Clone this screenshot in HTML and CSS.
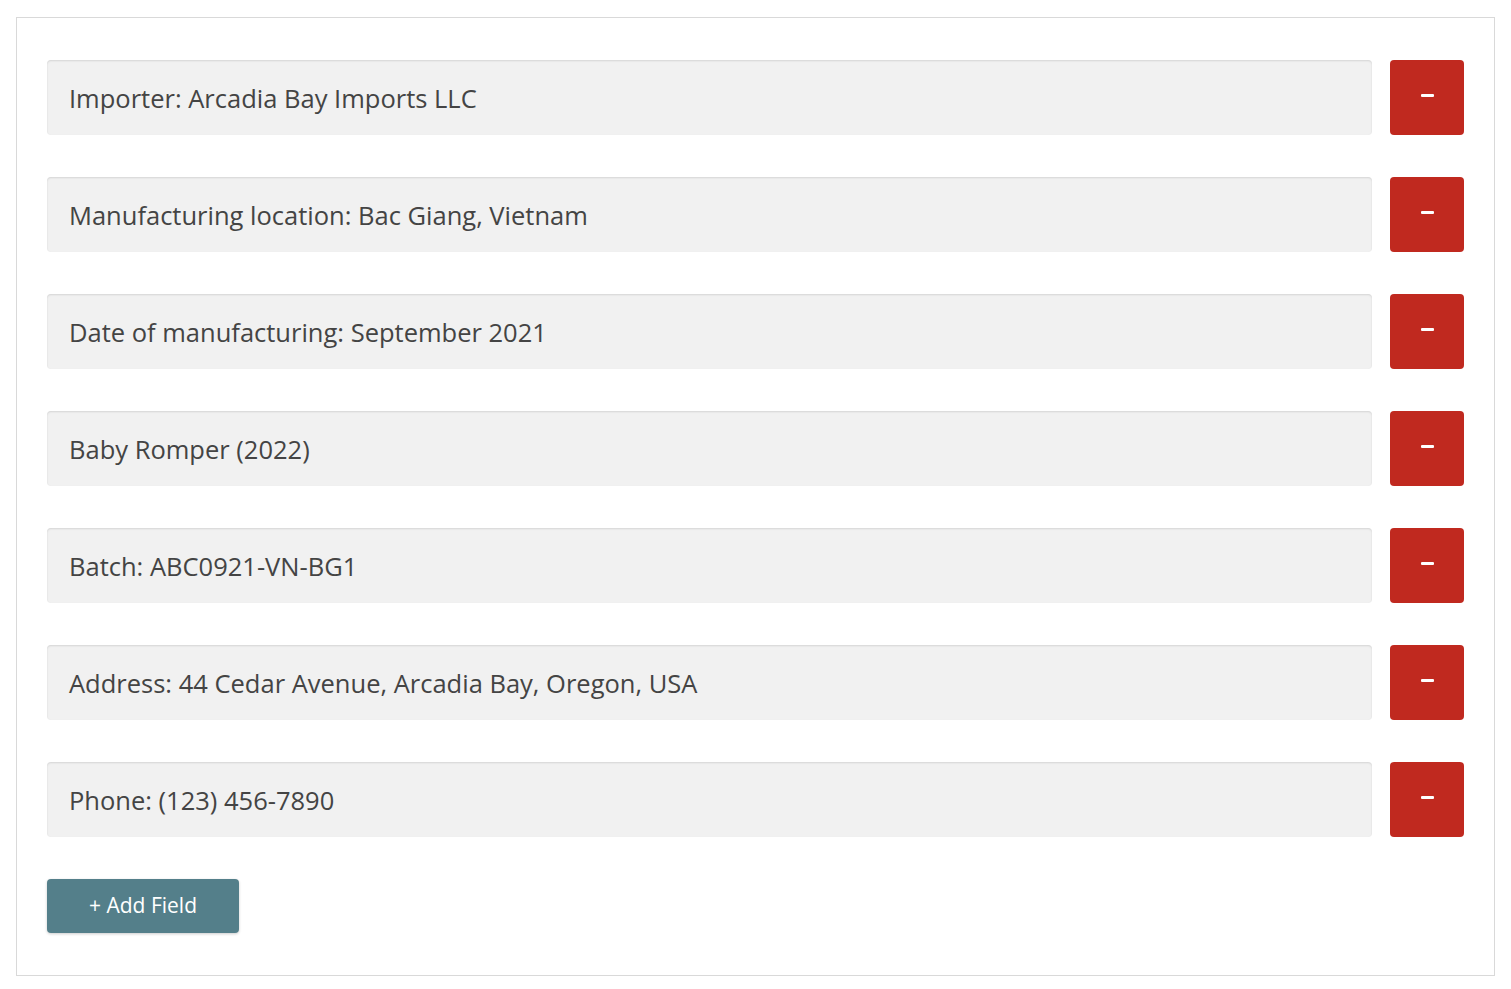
FILE: index.html
```html
<!DOCTYPE html>
<html>
<head>
<meta charset="utf-8">
<link rel="stylesheet" href="styles.css">
</head>
<body>
<div class="panel">
  <div class="row"><div class="field">Importer: Arcadia Bay Imports LLC</div><button class="remove"><span class="bar"></span></button></div>
  <div class="row"><div class="field">Manufacturing location: Bac Giang, Vietnam</div><button class="remove"><span class="bar"></span></button></div>
  <div class="row"><div class="field">Date of manufacturing: September 2021</div><button class="remove"><span class="bar"></span></button></div>
  <div class="row"><div class="field">Baby Romper (2022)</div><button class="remove"><span class="bar"></span></button></div>
  <div class="row"><div class="field">Batch: ABC0921-VN-BG1</div><button class="remove"><span class="bar"></span></button></div>
  <div class="row"><div class="field">Address: 44 Cedar Avenue, Arcadia Bay, Oregon, USA</div><button class="remove"><span class="bar"></span></button></div>
  <div class="row"><div class="field">Phone: (123) 456-7890</div><button class="remove"><span class="bar"></span></button></div>
  <div class="actions"><button class="add">+ Add Field</button></div>
</div>
</body>
</html>
```
FILE: styles.css
```css
html, body { margin: 0; background: #fff; }
body {
  padding: 17px 16px 13px 16px;
  font-family: "Open Sans", "Liberation Sans", sans-serif;
}
.panel {
  border: 1px solid #d9d9d9;
  padding: 42px 30px 42px 30px;
  display: flex;
  flex-direction: column;
  gap: 42px;
}
.row {
  display: flex;
  gap: 18px;
  height: 75px;
}
.field {
  flex: 1;
  background: #f1f1f1;
  border-radius: 4px;
  box-shadow: inset 0 1px 2px rgba(0,0,0,0.12);
  display: flex;
  align-items: center;
  padding-left: 22px;
  font-size: 25.5px;
  color: #444;
}
.remove {
  width: 74px;
  height: 75px;
  border: none;
  border-radius: 4px;
  background: #c0291f;
  display: flex;
  align-items: center;
  justify-content: center;
  padding: 0;
}
.bar {
  display: block;
  width: 13px;
  height: 3px;
  background: #fff;
  border-radius: 1px;
  margin-top: -4px;
}
.actions { display: flex; }
.add {
  width: 192px;
  height: 54px;
  border: none;
  border-radius: 4px;
  background: #547f8a;
  color: #fff;
  font-family: "Open Sans", "Liberation Sans", sans-serif;
  font-size: 21px;
  box-shadow: 0 1px 3px rgba(0,0,0,0.2);
  padding: 0 0 2px 0;
}
```
